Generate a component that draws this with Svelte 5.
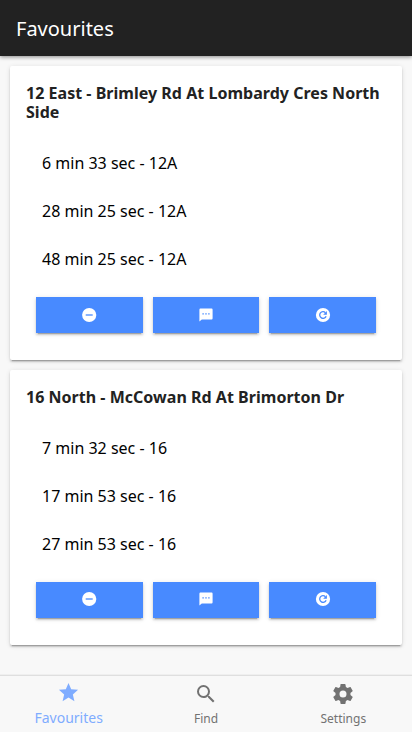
<script>
  const stops = [
    {
      title: '12 East - Brimley Rd At Lombardy Cres North Side',
      times: ['6 min 33 sec - 12A', '28 min 25 sec - 12A', '48 min 25 sec - 12A']
    },
    {
      title: '16 North - McCowan Rd At Brimorton Dr',
      times: ['7 min 32 sec - 16', '17 min 53 sec - 16', '27 min 53 sec - 16']
    }
  ];
</script>

<div class="page">
  <header><h1>Favourites</h1></header>
  <main>
    {#each stops as stop}
      <section class="card">
        <h2>{stop.title}</h2>
        <ul>
          {#each stop.times as time}
            <li>{time}</li>
          {/each}
        </ul>
        <div class="actions">
          <button aria-label="Remove">
            <svg viewBox="0 0 14 14"><circle cx="7.2" cy="7" r="7.1" /><path class="cut" d="M3.7 7h7" /></svg>
          </button>
          <button aria-label="Message">
            <svg viewBox="0 0 14 14">
              <path d="M1.4.6h11.2Q13.6.6 13.6 1.8v8.4q0 1.2-1 1.2H2.8L.4 13.4V1.8Q.4.6 1.4.6Z" />
              <path class="dots" d="M3.4 5.3h1.4v1.3H3.4ZM6.3 5.3h1.4v1.3H6.3ZM9.2 5.3h1.4v1.3H9.2Z" />
            </svg>
          </button>
          <button aria-label="Refresh">
            <svg viewBox="0 0 14 14">
              <circle cx="7" cy="7" r="7.1" />
              <path class="cut" d="M9.4 4.7A3.3 3.3 0 1 0 10.1 8.2" />
              <path class="dots" d="M10.9 3v3.7H7.2Z" />
            </svg>
          </button>
        </div>
      </section>
    {/each}
  </main>
  <nav>
    <a class="active" href="#favourites">
      <svg viewBox="0 0 24 24"><path d="M12 17.27 18.18 21l-1.64-7.03L22 9.24l-7.19-.61L12 2 9.19 8.63 2 9.24l5.46 4.73L5.82 21Z" /></svg>
      <span>Favourites</span>
    </a>
    <a href="#find">
      <svg viewBox="0 0 24 24"><path d="M15.5 14h-.79l-.28-.27A6.47 6.47 0 0 0 16 9.5 6.5 6.5 0 1 0 9.5 16c1.61 0 3.09-.59 4.23-1.57l.27.28v.79l5 4.99L20.49 19Zm-6 0a4.5 4.5 0 1 1 0-9 4.5 4.5 0 0 1 0 9Z" /></svg>
      <span>Find</span>
    </a>
    <a href="#settings">
      <svg viewBox="0 0 24 24"><path d="M19.43 12.98c.04-.32.07-.64.07-.98s-.03-.66-.07-.98l2.11-1.65c.19-.15.24-.42.12-.64l-2-3.46c-.12-.22-.39-.3-.61-.22l-2.49 1c-.52-.4-1.08-.73-1.69-.98l-.38-2.65A.488.488 0 0 0 14 2h-4c-.25 0-.46.18-.49.42l-.38 2.65c-.61.25-1.17.59-1.69.98l-2.49-1c-.23-.09-.49 0-.61.22l-2 3.46c-.13.22-.07.49.12.64l2.11 1.65c-.04.32-.07.65-.07.98s.03.66.07.98l-2.11 1.65c-.19.15-.24.42-.12.64l2 3.46c.12.22.39.3.61.22l2.49-1c.52.4 1.08.73 1.69.98l.38 2.65c.03.24.24.42.49.42h4c.25 0 .46-.18.49-.42l.38-2.65c.61-.25 1.17-.59 1.69-.98l2.49 1c.23.09.49 0 .61-.22l2-3.46c.12-.22.07-.49-.12-.64ZM12 15.5a3.5 3.5 0 1 1 0-7 3.5 3.5 0 0 1 0 7Z" /></svg>
      <span>Settings</span>
    </a>
  </nav>
</div>

<style>
  .page {
    display: flex;
    flex-direction: column;
    height: 100vh;
    overflow: hidden;
    background: #f8f8f8;
    color: #000;
    font-family: "Noto Sans", sans-serif;
  }
  header {
    display: flex;
    align-items: center;
    flex: 0 0 56px;
    box-sizing: border-box;
    padding: 2px 16px 0;
    background: #222;
    box-shadow: 0 1px 4px rgba(0, 0, 0, 0.45);
  }
  h1 {
    margin: 0;
    color: #fff;
    font-size: 20px;
    font-weight: 400;
    line-height: 24px;
  }
  main {
    flex: 1;
    display: flex;
    flex-direction: column;
    gap: 10px;
    padding: 10px;
  }
  .card {
    box-sizing: border-box;
    padding-bottom: 27px;
    border-radius: 2px;
    background: #fff;
    box-shadow: 0 2px 2px rgba(0, 0, 0, 0.14), 0 3px 1px -2px rgba(0, 0, 0, 0.2), 0 1px 5px rgba(0, 0, 0, 0.12);
  }
  h2 {
    margin: 0;
    padding: 17.6px 16px 17px;
    color: #222;
    font-size: 16px;
    font-weight: 700;
    letter-spacing: 0.025px;
    line-height: 19.2px;
  }
  ul {
    margin: 0;
    padding: 0 32px;
    list-style: none;
  }
  li {
    height: 48px;
    font-size: 16px;
    line-height: 48px;
  }
  .actions {
    display: flex;
    gap: 10px;
    padding: 14px 26px 0;
  }
  button {
    display: flex;
    align-items: center;
    justify-content: center;
    flex: 1;
    height: 36px;
    padding: 0;
    border: 0;
    background: #488aff;
    box-shadow: 0 2px 2px rgba(0, 0, 0, 0.14), 0 3px 1px -2px rgba(0, 0, 0, 0.2), 0 1px 5px rgba(0, 0, 0, 0.12);
  }
  button svg {
    width: 14px;
    height: 14px;
    margin-bottom: 1px;
    overflow: visible;
    fill: #fff;
  }
  .cut {
    fill: none;
    stroke: #488aff;
    stroke-width: 1.3;
  }
  .dots {
    fill: #488aff;
  }
  nav {
    display: flex;
    flex: 0 0 57px;
    box-sizing: border-box;
    border-top: 1px solid #dfdfdf;
    background: #f8f8f8;
    box-shadow: 0 -1px 0 #efefef;
  }
  a {
    flex: 1;
    display: flex;
    flex-direction: column;
    align-items: center;
    padding-top: 6px;
    color: #727272;
    font-size: 12px;
    line-height: 18px;
    text-decoration: none;
  }
  a svg {
    width: 24px;
    height: 24px;
    margin-bottom: 4px;
    fill: currentColor;
  }
  .active {
    padding-top: 5px;
    color: #7facff;
    font-size: 14px;
  }
  .active svg {
    width: 23px;
    height: 23px;
    margin-bottom: 5px;
  }
</style>
